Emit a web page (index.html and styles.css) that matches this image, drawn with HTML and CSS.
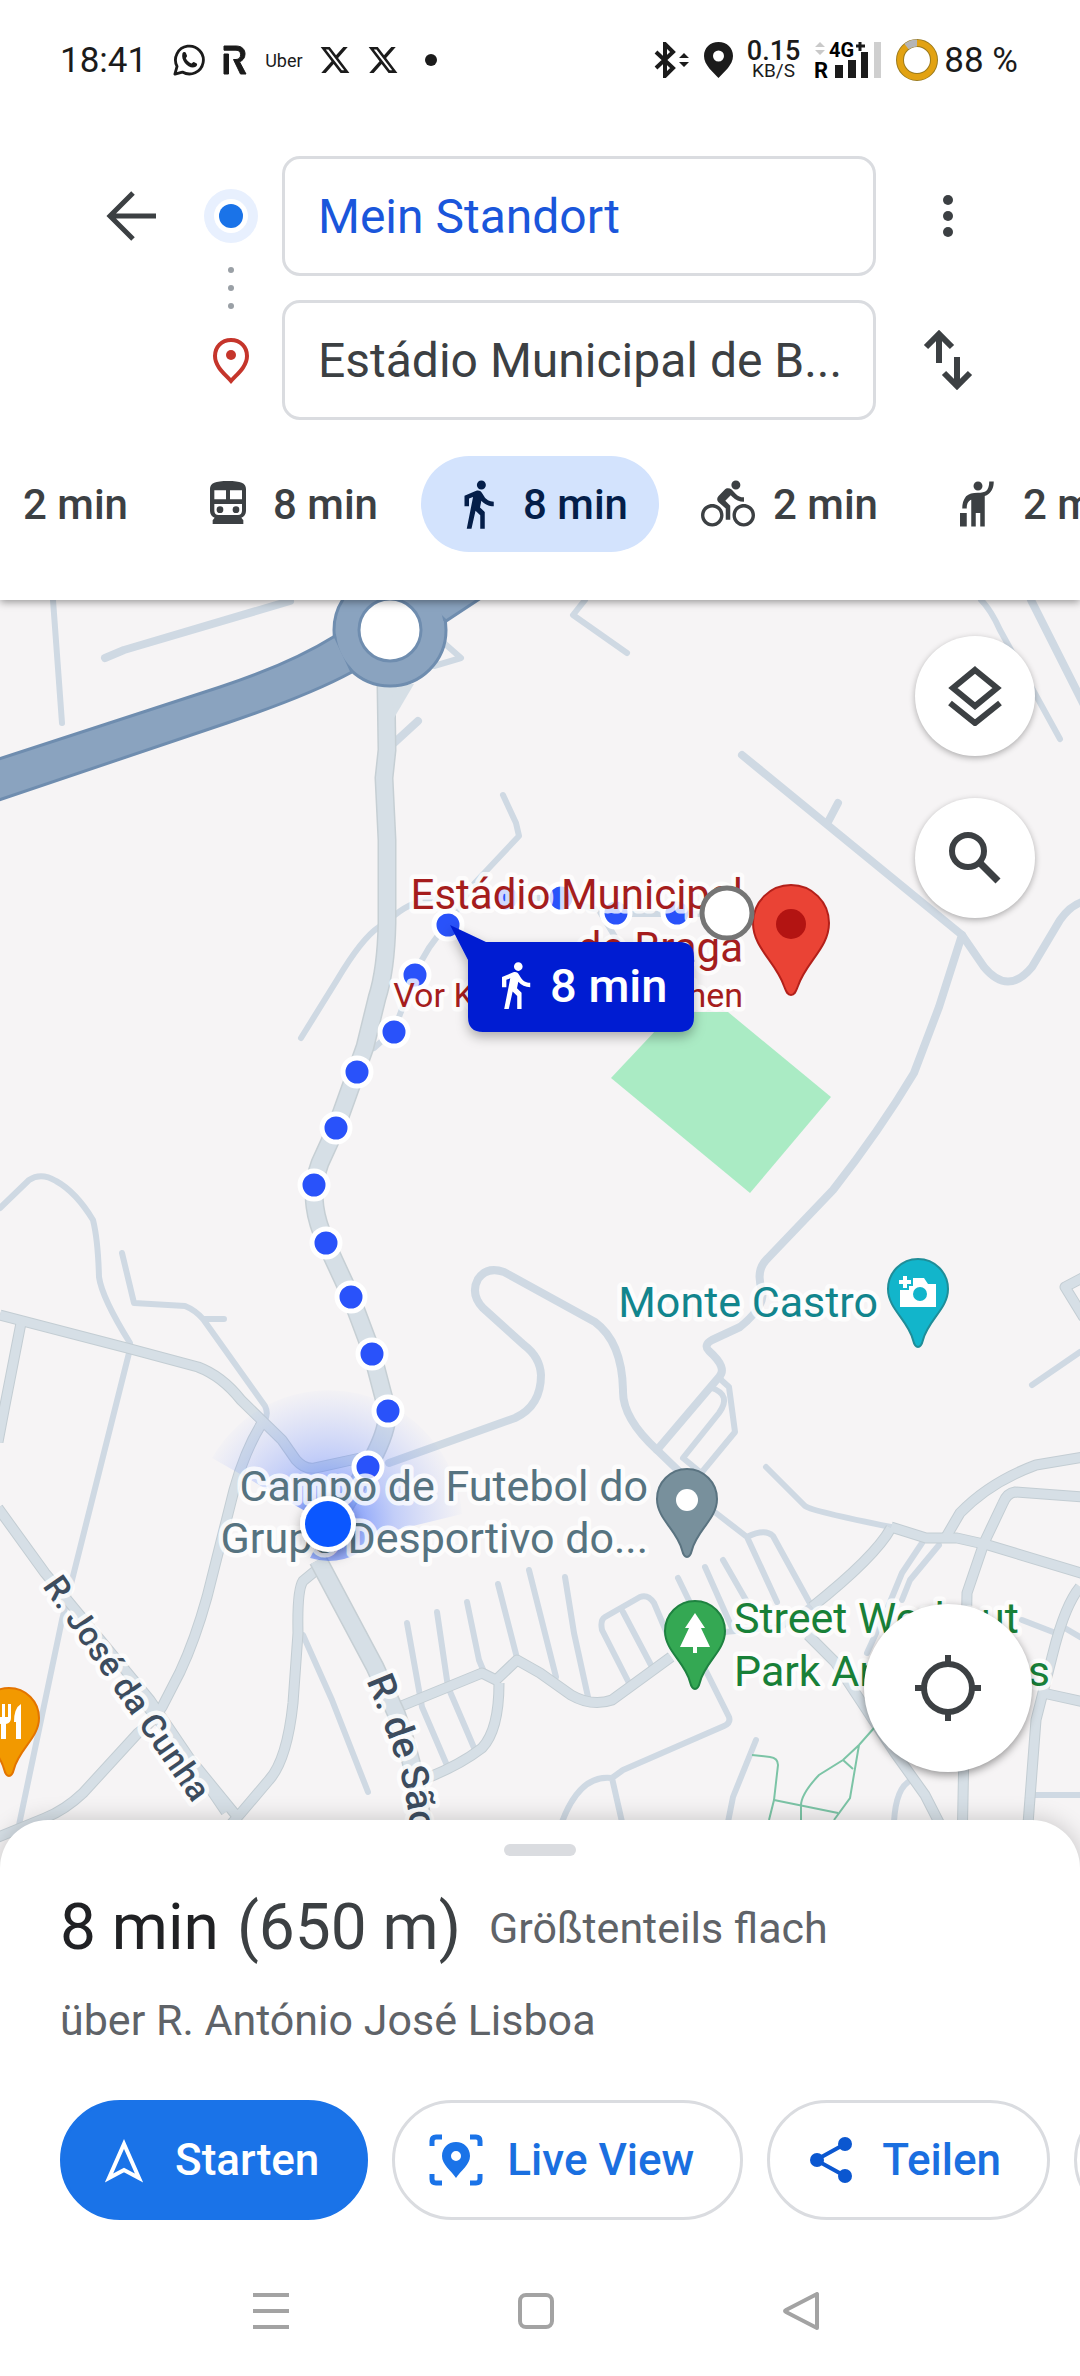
FILE: index.html
```html
<!DOCTYPE html>
<html lang="de">
<head>
    <meta charset="UTF-8">
    <meta name="viewport" content="width=device-width, initial-scale=1.0">
    <title>Route zu Fuß</title>
    <link rel="stylesheet" href="styles.css">
</head>
<body>
    <header class="header">
        <div class="status-bar">
            <div class="status-left">
                <span class="clock">18:41</span>
                <svg class="status-icon" viewBox="0 0 34 34"><path d="M2 32l2.300-8.200A14.800 14.800 0 1 1 10 29.800z" fill="none" stroke="#1b1b1b" stroke-width="3" stroke-linejoin="round"/><path d="M10 10c1-2 3-2 3.600-.6l1.300 3c.3.900-1.400 2.100-1.200 2.800 1.100 2.500 3.100 4.500 5.700 5.500.8.200 1.800-1.900 2.800-1.600l3 1.500c1 .8.300 3-1.600 3.800C17 27 8 18 10 10z" fill="#1b1b1b"/></svg>
                <svg class="status-icon status-logo" viewBox="0 0 22 28"><path d="M0 0h12c6 0 9 3.500 9 8 0 4-2.300 6.700-5.500 7.800L22 28h-5.500L9.500 13.500H12c3 0 4.600-2 4.600-4.800S15 4.200 12 4.200H0zM0 8h4.500v20H0z" fill="#1b1b1b" stroke="#1b1b1b"/></svg>
                <span class="status-tiny">Uber</span>
                <svg class="status-icon" viewBox="0 0 24 24"><path d="M18.244 2.250h3.308l-7.227 8.260 8.502 11.240H16.170l-5.214-6.817L4.990 21.750H1.680l7.730-8.835L1.254 2.250H8.080l4.713 6.231zm-1.161 17.520h1.833L7.084 4.126H5.117z" fill="#1b1b1b"/></svg>
                <svg class="status-icon" viewBox="0 0 24 24"><path d="M18.244 2.250h3.308l-7.227 8.260 8.502 11.240H16.170l-5.214-6.817L4.990 21.750H1.680l7.730-8.835L1.254 2.250H8.080l4.713 6.231zm-1.161 17.520h1.833L7.084 4.126H5.117z" fill="#1b1b1b"/></svg>
                <span class="status-dot"></span>
            </div>
            <div class="status-right">
                <svg class="bluetooth" viewBox="0 0 36 36"><path d="M2 10l17 16-8 8V2l8 8L2 26" fill="none" stroke="#1b1b1b" stroke-width="4"/><path d="M25 16l5-5 5 5zM25 20h10l-5 5z" fill="#1b1b1b"/></svg>
                <svg class="place" viewBox="0 0 29 36"><path d="M14.500 0C6 0 0 6 0 14c0 9 9 16 14.500 22C20 30 29 23 29 14 29 6 23 0 14.500 0zm0 8.500a5.500 5.500 0 1 1 0 11 5.500 5.500 0 0 1 0-11z" fill="#1b1b1b"/></svg>
                <span class="speed"><b>0.15</b><small>KB/S</small></span>
                <svg class="signal" viewBox="0 0 68 38">
                    <path d="M1 6l5-5 5 5zM1 9h10l-5 5z" fill="#c9c9c9"/>
                    <text class="signal-net" x="15" y="16">4G</text>
                    <path d="M46 1v9M42 5h9" stroke="#1b1b1b" stroke-width="3"/>
                    <text class="signal-roam" x="0" y="37">R</text>
                    <path d="M21 24h8v13h-8zM34 19h8v18h-8zM47 11h7v26h-7z" fill="#1b1b1b"/>
                    <path d="M60 1h7v36h-7z" fill="#cfcfcf"/>
                </svg>
                <svg class="battery" viewBox="0 0 42 42"><circle cx="21" cy="21" r="17" fill="none" stroke="#9b7a1c" stroke-width="8"/><circle cx="21" cy="21" r="17" fill="none" stroke="#e2a212" stroke-width="6"/><path d="M10.500 7.600A17 17 0 0 1 21 4" fill="none" stroke="#b5b5b5" stroke-width="7"/></svg>
                <span class="percent">88 %</span>
            </div>
        </div>

        <form class="route-form">
            <button type="button" class="icon-button back" aria-label="Zurück">
                <svg width="54" height="54" viewBox="0 0 54 54"><path d="M51 27H7M28 4L5 27l23 23" fill="none" stroke="#3c4043" stroke-width="5"/></svg>
            </button>
            <div class="route-marks">
                <svg width="54" height="54" viewBox="0 0 54 54"><circle cx="27" cy="27" r="27" fill="#e8f0fe"/><circle cx="27" cy="27" r="17" fill="#fff"/><circle cx="27" cy="27" r="12" fill="#1a73e8"/></svg>
                <svg width="6" height="42" viewBox="0 0 6 42"><g fill="#9aa0a6"><circle cx="3" cy="3" r="3"/><circle cx="3" cy="21" r="3"/><circle cx="3" cy="39" r="3"/></g></svg>
                <svg width="54" height="54" viewBox="0 0 54 54"><path d="M27 7c-9.500 0-16 7-16 16 0 11 11 19 16 25 5-6 16-14 16-25 0-9-6.500-16-16-16z" fill="none" stroke="#c5352b" stroke-width="4"/><circle cx="27" cy="22" r="5" fill="#c5352b"/></svg>
            </div>
            <input class="place-input place-from" type="text" aria-label="Startort" value="Mein Standort">
            <input class="place-input place-to" type="text" aria-label="Ziel" value="Estádio Municipal de B...">
            <button type="button" class="icon-button more" aria-label="Mehr">
                <svg width="54" height="54" viewBox="0 0 54 54"><g fill="#3c4043"><circle cx="27" cy="11" r="5"/><circle cx="27" cy="27" r="5"/><circle cx="27" cy="43" r="5"/></g></svg>
            </button>
            <button type="button" class="icon-button swap" aria-label="Start und Ziel tauschen">
                <svg width="54" height="60" viewBox="0 0 54 60"><path d="M18 33V4M5 17L18 4l13 13M36 27v29M23 43l13 13 13-13" fill="none" stroke="#3c4043" stroke-width="6"/></svg>
            </button>
        </form>

        <nav class="modes">
            <button class="mode">
                <svg viewBox="0 0 24 24"><path d="M18.900 6c-.2-.6-.8-1-1.400-1h-11c-.7 0-1.200.4-1.400 1L3 12v8c0 .6.400 1 1 1h1c.6 0 1-.4 1-1v-1h12v1c0 .6.400 1 1 1h1c.5 0 1-.4 1-1v-8zM6.500 16a1.500 1.500 0 1 1 0-3 1.500 1.500 0 0 1 0 3zm11 0a1.500 1.500 0 1 1 0-3 1.500 1.500 0 0 1 0 3zM5 11l1.500-4.500h11L19 11z"/></svg>
                <span>2 min</span>
            </button>
            <button class="mode">
                <svg viewBox="0 0 162 162"><path fill-rule="evenodd" d="M27 36c0-18 16-24 54-24s54 6 54 24v66c0 10-6 17-14 20l6 8v11H35v-11l6-8c-8-3-14-10-14-20zM40 40v27h35V40zM87 40v27h36V40zM40 81v20c0 8 5 13 12 13h59c7 0 12-5 12-13V81z"/><circle cx="57" cy="98" r="10"/><circle cx="105" cy="98" r="10"/></svg>
                <span>8 min</span>
            </button>
            <button class="mode mode-active">
                <svg viewBox="0 0 24 24"><path d="M13.500 5.500c1.100 0 2-.9 2-2s-.9-2-2-2-2 .9-2 2 .9 2 2 2zM9.800 8.900L7 23h2.100l1.800-8 2.100 2v6h2v-7.500l-2.100-2 .6-3C14.800 12 16.800 13 19 13v-2c-1.900 0-3.500-1-4.300-2.400l-1-1.600c-.4-.6-1-1-1.700-1-.3 0-.5.100-.8.100L6 8.300V13h2V9.600l1.800-.7"/></svg>
                <span>8 min</span>
            </button>
            <button class="mode">
                <svg viewBox="0 0 24 24"><path d="M15.500 5.500c1.100 0 2-.9 2-2s-.9-2-2-2-2 .9-2 2 .9 2 2 2zM5 12c-2.800 0-5 2.200-5 5s2.200 5 5 5 5-2.200 5-5-2.200-5-5-5zm0 8.500c-1.900 0-3.500-1.600-3.500-3.500s1.600-3.500 3.500-3.500 3.500 1.600 3.500 3.500-1.600 3.500-3.500 3.500zm5.800-10l2.400-2.400.8.800c1.300 1.300 3 2.100 5.100 2.100V9c-1.500 0-2.700-.6-3.600-1.500l-1.900-1.900c-.5-.4-1-.6-1.600-.6s-1.100.2-1.400.6L7.800 8.400c-.4.400-.6.900-.6 1.400 0 .6.200 1.100.6 1.400L11 14v5h2v-6.200l-2.200-2.300zM19 12c-2.800 0-5 2.200-5 5s2.200 5 5 5 5-2.200 5-5-2.200-5-5-5zm0 8.500c-1.900 0-3.500-1.600-3.500-3.500s1.600-3.500 3.500-3.500 3.500 1.600 3.500 3.500-1.600 3.500-3.500 3.500z"/></svg>
                <span>2 min</span>
            </button>
            <button class="mode">
                <svg viewBox="0 0 24 24"><path d="M12 6c-1.100 0-2-.9-2-2s.9-2 2-2 2 .9 2 2-.9 2-2 2zm5-4h2c0 2.700-.9 4.400-2.300 5.500-.5.400-1.100.7-1.700.9V22h-2v-6h-2v6H9V10.100c-.3.100-.5.200-.6.300-.9.700-1.400 1.500-1.400 3.600H5c0-2.100.4-3.800 1.700-5.500C7.900 7.500 9.600 7 12 7c1.700 0 2.900-.3 3.600-.8.900-.8 1.400-2.100 1.400-4.200zM4 16h3v6H4z"/></svg>
                <span>2 min</span>
            </button>
        </nav>
    </header>

    <main class="map">
        <svg class="map-canvas" viewBox="0 0 1080 1268" preserveAspectRatio="xMidYMin slice">
            <defs>
                <radialGradient id="beam" gradientUnits="userSpaceOnUse" cx="328" cy="924" r="134">
                    <stop offset="0" stop-color="#2b5cff" stop-opacity=".75"/>
                    <stop offset=".5" stop-color="#4b74ff" stop-opacity=".3"/>
                    <stop offset="1" stop-color="#6b8cff" stop-opacity=".02"/>
                </radialGradient>
                <filter id="soft" x="-30%" y="-30%" width="160%" height="180%">
                    <feDropShadow dx="0" dy="5" stdDeviation="6" flood-opacity=".3"/>
                </filter>
                <path id="pin" d="M0 88C-3 88-4 85-5 81-10 61-30 50-30 30a30 30 0 0 1 60 0C30 50 10 61 5 81 4 85 3 88 0 88z"/>
                <path id="jose" d="M42 986L196 1208"/>
                <path id="sao" d="M366 1080Q393 1145 402 1180T412 1262"/>
                <g id="roads">
                    <path d="M0 715L127 748 198 767Q222 776 241 800L282 840 296 860Q305 870 315 868L365 857"/>
                    <path d="M21 723L5 805-2 842M262 823Q245 850 234 890L207 997Q195 1040 180 1072L162 1107Q150 1125 138 1133L83 1193Q65 1210 45 1218L-4 1238"/>
                    <path d="M-2 908L45 973 150 1100 226 1212M146 1105L235 1214M320 967L303 981Q297 990 298 1033L293 1103Q287 1160 269 1180L241 1213 226 1230"/>
                    <path d="M399 1107L482 1073 496 1080 517 1060 540 1073 571 1095Q592 1107 612 1100L671 1057M499 1083Q499 1130 482 1148 460 1165 427 1178"/>
                    <path d="M1084 857L1036 865Q990 882 960 913L946 937M1084 897L1015 892Q1007 893 1003 903L984 943 967 993 962 1250"/>
                    <path d="M891 927L926 938H957L988 945 1084 974M891 928Q875 957 812 1007M808 1035L835 1062 895 1153 925 1195 948 1240M1080 987Q1065 1005 1053 1053L1036 1120 1026 1250M1043 1093L1084 1102M1084 718L1065 687 1084 677"/>
                </g>
                <g id="avenues">
                    <path d="M386 85L387 150 384 178 387 240V323Q386 370 377 398L365 447 336 528 320 563Q312 585 315 607 317 623 326 643L351 697 372 753 387 810Q389 828 372 860L330 930"/>
                    <path d="M318 960L375 1067 396 1113Q418 1170 427 1260"/>
                </g>
            </defs>

            <path class="field" d="M611 478L673 412H728L831 497 750 593z"/>

            <!-- small streets -->
            <g class="street">
                <path d="M53 0L62 123M585 0L573 15 627 53M444 43L461 58 434 66"/>
                <path d="M503 195L516 223 519 236 472 286 448 325Q427 345 415 375L394 430 374 448M395 315Q413 300 440 297"/>
                <path d="M379 327Q362 338 337 380L301 438M505 298H561L590 308 616 314H725M600 312L620 345"/>
                <path d="M981 0Q991 10 1000 30L1060 139M0 608L29 580Q41 572 56 581 76 592 93 620 98 640 99 677 102 698 130 743"/>
                <path d="M122 653L134 703 185 706Q195 710 203 719L265 806Q269 814 264 822M203 719H224M129 753L62 1020 19 1225"/>
                <path d="M719 778L729 787 735 832 702 872M712 788Q732 795 719 813L683 858 700 872"/>
                <path d="M716 913L747 937 777 1002M747 937Q765 928 773 936L812 1007M766 867L805 906Q811 911 891 927"/>
                <path d="M303 1035L332 1100 368 1192M407 1023L422 1107 446 1163M437 1012L448 1087 475 1150M467 1002L479 1060 484 1072M498 984L517 1058M529 970L556 1077M565 977L574 1033 588 1097"/>
                <path d="M630 1085L602 1030Q600 1020 605 1017L640 997Q648 994 654 1003L674 1050M623 1012L652 1067M678 978L695 1013M705 967L733 1030M723 960L750 1007M724 1032L781 1027 809 1007"/>
                <path d="M702 1063L729 1117Q731 1123 724 1126L623 1170 612 1178Q580 1174 562 1222M612 1178L622 1222M756 1140L733 1197 728 1222"/>
                <path d="M922 943L902 973 888 1007 867 1053M939 945L910 980 902 1000M1022 1020L1053 1032M1063 1027L1080 1037M1034 1195H1080M912 1180Q896 1186 894 1222M1032 785L1080 752"/>
            </g>
            <g class="street street-wide">
                <path d="M105 58L124 50 290 1M394 143L418 121M1031 0L1084 105M742 155L962 335M828 222L838 203"/>
                <path d="M962 335L984 367Q1008 396 1032 367L1060 320Q1070 306 1082 302M962 335L939 407 914 473Q880 530 833 590L768 658Q755 670 762 690 766 706 740 727L712 740Q703 745 709 751 728 768 719 777L657 850"/>
                <path d="M389 863L515 818Q541 806 541 775 540 757 524 745L483 708Q470 694 478 679 487 666 504 672L595 722Q622 742 623 790 622 818 657 850L688 880"/>
            </g>

            <!-- wider roads: outline first, then the fill -->
            <use class="road-edge" href="#roads"/>
            <use class="road-fill" href="#roads"/>
            <use class="avenue-edge" href="#avenues"/>
            <use class="avenue-fill" href="#avenues"/>
            <path class="avenue-fork" d="M391 84h23l-20 34z"/>

            <path class="park-path" d="M752 1155L770 1157Q778 1158 778 1165L774 1200 769 1220M774 1200L838 1213M874 1128L859 1145 843 1160 819 1175Q800 1195 801 1207V1222M859 1145L850 1198 834 1220M843 1160L853 1169"/>

            <!-- highway and roundabout -->
            <circle class="highway" cx="390" cy="30" r="56"/>
            <path class="highway" d="M-4 160L220 87Q290 64 335 36L352 72Q310 95 227 123L-4 201zM420 -4L484-4 446 21z"/>
            <circle class="highway-fill" cx="390" cy="30" r="54"/>
            <circle class="island" cx="390" cy="30" r="31"/>

            <path d="M328 924L212 858A134 134 0 0 1 462 914L380 934Q350 970 310 958z" fill="url(#beam)"/>

            <!-- walking route -->
            <g class="route-dots">
                <circle cx="506" cy="298" r="14"/><circle cx="561" cy="298" r="14"/><circle cx="616" cy="313" r="14"/><circle cx="677" cy="313" r="14"/>
                <circle cx="448" cy="325" r="14"/><circle cx="415" cy="375" r="14"/><circle cx="394" cy="432" r="14"/><circle cx="357" cy="472" r="14"/>
                <circle cx="336" cy="528" r="14"/><circle cx="314" cy="585" r="14"/><circle cx="326" cy="643" r="14"/><circle cx="351" cy="697" r="14"/>
                <circle cx="372" cy="754" r="14"/><circle cx="388" cy="811" r="14"/><circle cx="368" cy="867" r="14"/>
            </g>

            <g class="label label-stadium">
                <text x="743" y="309">Estádio Municipal</text>
                <text x="743" y="362">de Braga</text>
                <text class="label-note" x="743" y="407">Vor Kurzem angesehen</text>
            </g>
            <text class="label label-castro" x="878" y="717">Monte Castro</text>
            <g class="label label-campo">
                <text x="648" y="901">Campo de Futebol do</text>
                <text x="648" y="953">Grupo Desportivo do...</text>
            </g>
            <g class="label label-park">
                <text x="734" y="1033">Street Workout</text>
                <text x="734" y="1086">Park Andorinhas</text>
            </g>
            <text class="label label-street"><textPath href="#jose">R. José da Cunha</textPath></text>
            <text class="label label-street label-street-main"><textPath href="#sao">R. de São</textPath></text>

            <!-- pins -->
            <g transform="translate(918 659)">
                <use href="#pin" fill="#12b5cb" stroke="#1f8d98" stroke-width="2"/>
                <path d="M-18 31h9v-4h4v-8h11l4 6h8v23h-36zM-15 17h4v4h4v4h-4v4h-4v-4h-4v-4h4z" fill="#fff"/><circle cx="2" cy="35" r="7" fill="#12b5cb"/>
            </g>
            <g transform="translate(687 869)">
                <use href="#pin" fill="#78909c" stroke="#5a7380" stroke-width="2"/>
                <circle cx="0" cy="31" r="11" fill="#fff"/>
            </g>
            <g transform="translate(695 1001)">
                <use href="#pin" fill="#34a853" stroke="#1e8240" stroke-width="2"/>
                <path d="M0 12L10 27H6L15 46H2v6h-4v-6h-13L-6 27h-4z" fill="#fff"/>
            </g>
            <g transform="translate(9 1088)">
                <use href="#pin" fill="#f29900" stroke="#e37400" stroke-width="2"/>
                <path d="M-13 16v14q0 5 5 6v15h5V36q5-1 5-6V16h-3v13h-3V16h-3v13h-3V16zM12 16q-7 4-7 18h2v17h5z" fill="#fff"/>
            </g>
            <path d="M791 395c-4 0-5-4-7-9-8-24-31-38-31-63a38 38 0 0 1 76 0c0 25-23 39-31 63-2 5-3 9-7 9z" fill="#ea4335" stroke="#b3201a" stroke-width="2"/>
            <circle cx="791" cy="324" r="15" fill="#b31412"/>

            <circle cx="727" cy="313" r="25" fill="#fff" stroke="#757575" stroke-width="5"/>

            <!-- travel time bubble -->
            <g filter="url(#soft)">
                <path d="M450 325L486 342H679q15 0 15 15v60q0 15-15 15H483q-15 0-15-15V360z" fill="#041ed2"/>
            </g>
            <path transform="translate(489 359) scale(2.170)" d="M13.500 5.500c1.100 0 2-.9 2-2s-.9-2-2-2-2 .9-2 2 .9 2 2 2zM9.800 8.900L7 23h2.100l1.800-8 2.100 2v6h2v-7.500l-2.100-2 .6-3C14.800 12 16.800 13 19 13v-2c-1.900 0-3.500-1-4.300-2.400l-1-1.600c-.4-.6-1-1-1.700-1-.3 0-.5.100-.8.100L6 8.300V13h2V9.600l1.800-.7" fill="#fff"/>
            <text class="bubble-text" x="550" y="402">8 min</text>

            <!-- current location -->
            <circle cx="328" cy="924" r="28" fill="#fff" filter="url(#soft)"/>
            <circle cx="328" cy="924" r="23" fill="#0b57ff"/>
        </svg>

        <div class="map-tools">
            <button class="round-button" aria-label="Ebenen">
                <svg width="60" height="60" viewBox="0 0 60 60"><path d="M30 4L52 22 30 40 8 22zM5 37L30 57 55 37" fill="none" stroke="#3c4043" stroke-width="6"/></svg>
            </button>
            <button class="round-button" aria-label="Suchen">
                <svg width="60" height="60" viewBox="0 0 60 60"><circle cx="23" cy="23" r="16" fill="none" stroke="#3c4043" stroke-width="6"/><path d="M35 35l18 18" stroke="#3c4043" stroke-width="7"/></svg>
            </button>
        </div>
        <button class="round-button locate" aria-label="Mein Standort">
            <svg width="66" height="66" viewBox="0 0 66 66"><circle cx="33" cy="33" r="24" fill="none" stroke="#3c4043" stroke-width="6"/><path d="M33 0v9M33 57v9M0 33h9M57 33h9" stroke="#3c4043" stroke-width="6"/></svg>
        </button>
    </main>

    <section class="sheet">
        <div class="handle"></div>
        <h1 class="summary"><span class="duration">8 min</span> <span class="distance">(650 m)</span> <span class="terrain">Größtenteils flach</span></h1>
        <p class="via">über R. António José Lisboa</p>
        <div class="actions">
            <button class="action action-primary">
                <svg width="54" height="54" viewBox="0 0 54 54"><path d="M27 11L42 45 27 37 12 45z" fill="none" stroke="#fff" stroke-width="4"/></svg>
                Starten
            </button>
            <button class="action">
                <svg width="54" height="54" viewBox="0 0 54 54"><path d="M3 13V8q0-4 4-4h6M41 4h6q4 0 4 4v5M3 41v5q0 4 4 4h6M41 50h6q4 0 4-4v-5" fill="none" stroke="#1a73e8" stroke-width="5"/><path d="M27 9c-8 0-14 6-14 14 0 9 9 14 14 22 5-8 14-13 14-22 0-8-6-14-14-14zm0 9a5 5 0 1 1 0 10 5 5 0 0 1 0-10z" fill="#1a73e8"/></svg>
                Live View
            </button>
            <button class="action">
                <svg width="54" height="54" viewBox="0 0 54 54"><path d="M41 11L12 27 41 43" fill="none" stroke="#0b57d0" stroke-width="4"/><g fill="#0b57d0"><circle cx="41" cy="11" r="7"/><circle cx="13" cy="27" r="7"/><circle cx="41" cy="43" r="7"/></g></svg>
                Teilen
            </button>
            <button class="action" aria-label="Speichern">
                <svg width="54" height="54" viewBox="0 0 54 54"><path d="M14 8h26v38L27 40 14 46z" fill="none" stroke="#0b57d0" stroke-width="5"/></svg>
            </button>
        </div>
        <nav class="system-nav">
            <button class="icon-button" aria-label="Letzte Apps"><svg width="36" height="38" viewBox="0 0 36 38"><path d="M0 3h36M0 19h36M0 35h36" stroke="#a3a3a3" stroke-width="4"/></svg></button>
            <button class="icon-button" aria-label="Startseite"><svg width="36" height="38" viewBox="0 0 36 38"><rect x="2" y="3" width="32" height="32" rx="6" fill="none" stroke="#a3a3a3" stroke-width="4"/></svg></button>
            <button class="icon-button" aria-label="Zurück"><svg width="36" height="38" viewBox="0 0 36 38"><path d="M34 2v34L3 20q-2-1 0-2z" fill="none" stroke="#a3a3a3" stroke-width="4" stroke-linejoin="round"/></svg></button>
        </nav>
    </section>
</body>
</html>
```

FILE: styles.css
```css
* {
    box-sizing: border-box;
}
body {
    margin: 0;
    min-height: 100vh;
    display: flex;
    flex-direction: column;
    overflow-x: hidden;
    background-color: #fff;
    color: #3c4043;
    font-family: Roboto, "Noto Sans", sans-serif;
}
button {
    font-family: inherit;
    cursor: pointer;
}
svg {
    display: block;
    flex-shrink: 0;
}

/* header */
.header {
    position: relative;
    z-index: 2;
    padding-bottom: 48px;
    background-color: #fff;
    box-shadow: 0 2px 8px rgba(0,0,0,0.4);
}
.status-bar {
    height: 120px;
    padding: 0 62px 0 60px;
    display: flex;
    align-items: center;
    justify-content: space-between;
    color: #1b1b1b;
}
.status-left {
    display: flex;
    align-items: center;
    gap: 16px;
}
.status-right {
    display: flex;
    align-items: center;
    gap: 14px;
}
.clock {
    font-size: 35px;
    margin-right: 10px;
}
.percent {
    font-size: 35px;
    margin-left: -8px;
}
.status-icon {
    width: 32px;
    height: 34px;
}
.status-logo {
    width: 28px;
    height: 28px;
    overflow: visible;
}
.status-tiny {
    font-size: 18px;
}
.status-dot {
    width: 12px;
    height: 12px;
    margin-left: 10px;
    border-radius: 50%;
    background-color: #1b1b1b;
}
.bluetooth {
    width: 36px;
    height: 36px;
}
.place {
    width: 29px;
    height: 36px;
}
.speed {
    display: flex;
    flex-direction: column;
    align-items: center;
    line-height: 18px;
}
.speed b {
    font-size: 27px;
    line-height: 22px;
    font-weight: 500;
}
.speed small {
    font-size: 19px;
}
.signal {
    width: 68px;
    height: 38px;
    overflow: visible;
}
.signal-net {
    font-size: 20px;
    font-weight: 700;
}
.signal-roam {
    font-size: 22px;
    font-weight: 700;
}
.battery {
    width: 42px;
    height: 42px;
}

.route-form {
    display: grid;
    grid-template-columns: 96px 102px 1fr 144px;
    grid-template-rows: 120px 120px;
    row-gap: 24px;
    padding: 36px 60px 0 84px;
}
.icon-button {
    display: flex;
    align-items: center;
    justify-content: center;
    padding: 0;
    border: none;
    background: none;
}
.back {
    grid-area: 1 / 1;
}
.route-marks {
    grid-area: 1 / 2 / 3 / 3;
    display: flex;
    flex-direction: column;
    align-items: center;
    gap: 24px;
    padding-top: 33px;
}
.place-input {
    min-width: 0;
    padding: 0 33px;
    border: 3px solid #dadce0;
    border-radius: 18px;
    background-color: #fff;
    color: #3c4043;
    font-family: inherit;
    font-size: 48px;
}
.place-from {
    grid-area: 1 / 3;
    color: #1a56db;
}
.place-to {
    grid-area: 2 / 3;
}
.more {
    grid-area: 1 / 4;
}
.swap {
    grid-area: 2 / 4;
}

.modes {
    display: flex;
    justify-content: center;
    gap: 12px;
    margin-top: 36px;
    overflow: hidden;
}
.mode {
    flex: 0 0 238px;
    height: 96px;
    padding: 0 0 0 30px;
    display: flex;
    align-items: center;
    gap: 18px;
    border: none;
    border-radius: 48px;
    background: none;
    color: #3c4043;
    font-size: 42px;
    font-weight: 500;
    white-space: nowrap;
}
.mode svg {
    width: 54px;
    height: 54px;
    fill: currentColor;
}
.mode-active {
    background-color: #d3e3fd;
    color: #041e49;
}

/* map */
.map {
    position: relative;
    flex: 1;
    min-height: 600px;
    background-color: #f6f4f5;
}
.map-canvas {
    position: absolute;
    width: 100%;
    height: 100%;
}
.field {
    fill: #aaebc4;
}
.street {
    fill: none;
    stroke: #cfd9e3;
    stroke-width: 6;
    stroke-linecap: round;
    stroke-linejoin: round;
}
.street-wide {
    stroke-width: 8;
}
.road-edge {
    fill: none;
    stroke: #c3cdd3;
    stroke-width: 11;
    stroke-linejoin: round;
}
.road-fill {
    fill: none;
    stroke: #d6dfe6;
    stroke-width: 9;
    stroke-linejoin: round;
}
.avenue-edge {
    fill: none;
    stroke: #c6cfd4;
    stroke-width: 19;
}
.avenue-fill {
    fill: none;
    stroke: #d6dfe6;
    stroke-width: 16;
}
.avenue-fork {
    fill: #d6dfe6;
}
.park-path {
    fill: none;
    stroke: #7cc4a6;
    stroke-width: 2;
}
.highway {
    fill: #8aa3bf;
    stroke: #6f8daf;
    stroke-width: 3;
}
.highway-fill {
    fill: #8aa3bf;
}
.island {
    fill: #fff;
    stroke: #6f8daf;
    stroke-width: 3;
}
.route-dots {
    fill: #2952fa;
    stroke: #fff;
    stroke-width: 5;
}
.label {
    font-size: 43px;
    stroke: rgba(255,255,255,0.8);
    stroke-width: 9px;
    stroke-linejoin: round;
    paint-order: stroke;
}
.label-stadium {
    fill: #a51d1d;
    font-size: 42px;
    text-anchor: end;
}
.label-note {
    font-size: 34px;
}
.label-castro {
    fill: #12858d;
    text-anchor: end;
}
.label-campo {
    fill: #567380;
    text-anchor: end;
}
.label-park {
    fill: #188038;
}
.label-street {
    fill: #3c4c5e;
    font-size: 34px;
    font-weight: 500;
}
.label-street-main {
    font-size: 38px;
}
.bubble-text {
    fill: #fff;
    font-size: 47px;
    font-weight: 500;
}
.map-tools {
    position: absolute;
    top: 36px;
    right: 45px;
    display: flex;
    flex-direction: column;
    gap: 42px;
}
.round-button {
    width: 120px;
    height: 120px;
    padding: 0;
    display: flex;
    align-items: center;
    justify-content: center;
    border: none;
    border-radius: 50%;
    background-color: #fff;
    box-shadow: 0 2px 6px rgba(0,0,0,0.3);
}
.locate {
    position: absolute;
    right: 48px;
    bottom: 96px;
    width: 168px;
    height: 168px;
    box-shadow: 0 3px 9px rgba(0,0,0,0.4);
}

/* bottom sheet */
.sheet {
    position: relative;
    margin-top: -48px;
    padding-top: 24px;
    border-radius: 48px 48px 0 0;
    background-color: #fff;
    box-shadow: 0 0 24px rgba(0,0,0,0.2);
}
.handle {
    width: 72px;
    height: 12px;
    margin: 0 auto;
    border-radius: 6px;
    background-color: #dadce0;
}
.summary {
    display: flex;
    align-items: center;
    margin: 34px 60px 0;
    font-size: 64px;
    line-height: 76px;
    font-weight: 400;
}
.duration {
    color: #202124;
}
.distance {
    margin-left: 18px;
}
.terrain {
    margin-left: 28px;
    color: #5f6368;
    font-size: 43px;
}
.via {
    margin: 26px 60px 0;
    color: #5f6368;
    font-size: 43px;
    line-height: 56px;
}
.actions {
    display: flex;
    gap: 24px;
    margin-top: 52px;
    padding-left: 60px;
    overflow: hidden;
}
.action {
    flex-shrink: 0;
    height: 120px;
    padding: 0 46px 0 34px;
    display: flex;
    align-items: center;
    gap: 24px;
    border: 3px solid #dadce0;
    border-radius: 60px;
    background-color: #fff;
    color: #1a6fe0;
    font-size: 44px;
    font-weight: 500;
}
.action-primary {
    border-color: #1a73e8;
    background-color: #1a73e8;
    color: #fff;
}
.system-nav {
    display: flex;
    justify-content: center;
    gap: 229px;
    height: 130px;
    margin-top: 26px;
    padding-right: 8px;
}
```
